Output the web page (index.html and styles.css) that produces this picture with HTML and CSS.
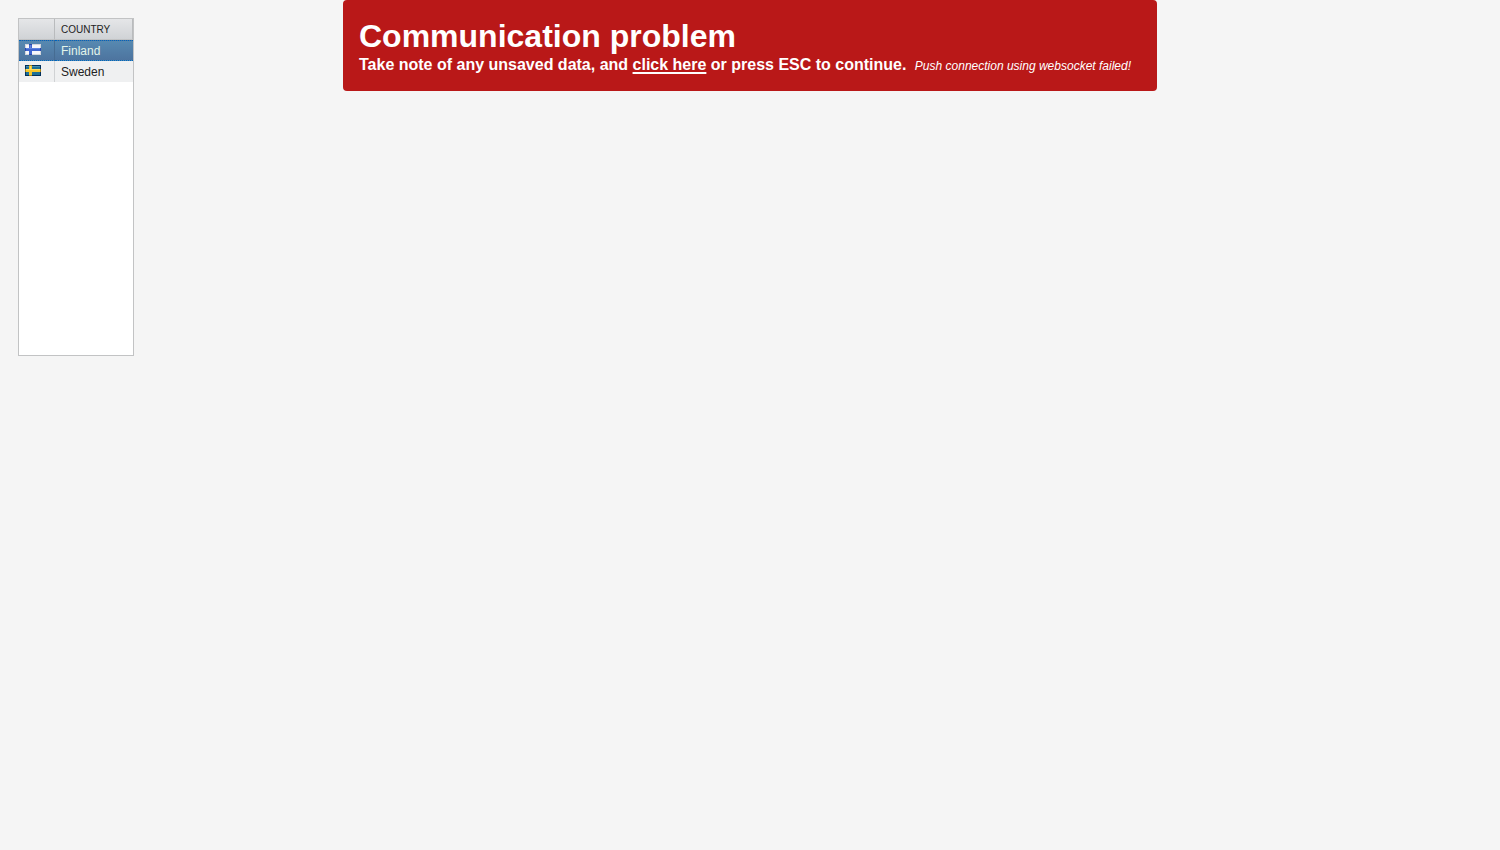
FILE: index.html
```html
<!DOCTYPE html>
<html lang="en">
<head>
<meta charset="utf-8">
<title>Countries</title>
<link rel="stylesheet" href="styles.css">
</head>
<body>
<main class="content">
  <div class="table-box">
    <table class="countries">
      <thead>
        <tr><th class="flag-cell"></th><th>COUNTRY</th></tr>
      </thead>
      <tbody>
        <tr class="selected">
          <td class="flag-cell">
            <svg class="flag" width="16" height="11" viewBox="0 0 16 11" shape-rendering="crispEdges" role="img" aria-label="Finnish flag">
              <rect width="16" height="11" fill="#d3d6dd"/>
              <rect x="1" y="1" width="14" height="9" fill="#f6f7fa"/>
              <path d="M4 0h3v11H4zM0 4h16v3H0z" fill="#3f66d0"/>
              <path d="M5 1h1v3H5zM1 4h14v1H1z" fill="#5f82dc"/>
              <path d="M4 0h3v1H4zM4 10h3v1H4zM0 4h1v3H0zM15 4h1v3H15z" fill="#2a49ae"/>
            </svg>
          </td>
          <td>Finland</td>
        </tr>
        <tr>
          <td class="flag-cell">
            <svg class="flag" width="16" height="11" viewBox="0 0 16 11" shape-rendering="crispEdges" role="img" aria-label="Swedish flag">
              <rect width="16" height="11" fill="#02305c"/>
              <rect x="1" y="1" width="14" height="9" fill="#1c7097"/>
              <path d="M1 1h14v1H1z" fill="#4790ae"/>
              <path d="M4 0h3v11H4zM0 4h16v3H0z" fill="#f5c72c"/>
              <path d="M5 1h1v3H5zM1 4h14v1H1z" fill="#ffdd61"/>
              <path d="M4 0h3v1H4zM4 10h3v1H4zM0 4h1v3H0zM15 4h1v3H15z" fill="#a8851b"/>
            </svg>
          </td>
          <td>Sweden</td>
        </tr>
      </tbody>
    </table>
  </div>
</main>
<div class="notification" role="alert">
  <h1 class="caption">Communication problem</h1>
  <p class="message">Take note of any unsaved data, and <a class="link" href="#">click here</a> or press ESC to continue. <em class="details">Push connection using websocket failed!</em></p>
</div>
</body>
</html>
```
FILE: styles.css
```css
body {
  margin: 0;
  min-height: 100vh;
  background: #f5f5f5;
  color: #222;
  font-family: "Liberation Sans", Arial, sans-serif;
}

.content {
  display: flex;
  padding: 18px;
}

.table-box {
  min-height: 336px;
  border: 1px solid #c2c3c4;
  background: #fff;
}

.countries {
  border-collapse: separate;
  border-spacing: 0;
  text-align: left;
}

.countries th,
.countries td {
  box-sizing: border-box;
  height: 21px;
  min-width: 78px;
  padding: 0 6px;
  vertical-align: middle;
}

.countries .flag-cell {
  min-width: 36px;
  border-right: 1px solid #d0d2d4;
}

.countries th {
  border-bottom: 1px solid #c2c3c4;
  background: linear-gradient(#e5e6e8, #d0d3d6);
  font-size: 10px;
  font-weight: normal;
}

.countries th.flag-cell {
  border-right-color: #b9bbbd;
}

.countries th:last-child {
  border-right: 1px solid #b9bbbd;
}

.countries td {
  background: #eff0f1;
  font-size: 12px;
}

.countries .selected td {
  border-top: 1px dotted #0066bd;
  border-bottom: 1px dotted #0066bd;
  background: linear-gradient(#5789b1, #4d749f);
  color: #e3f5ea;
}

.countries .selected .flag-cell {
  border-right-color: #466c92;
}

.flag {
  display: block;
  margin-bottom: 2px;
}

.notification {
  position: absolute;
  top: 0;
  left: 50%;
  transform: translateX(-50%);
  box-sizing: border-box;
  width: max-content;
  max-width: 100%;
  padding: 17px 26px 15px 16px;
  border-radius: 4px;
  background: #b91818;
  color: #fff;
}

.caption {
  margin: 0;
  font-size: 32px;
  line-height: 38px;
}

.message {
  margin: 0;
  font-size: 16px;
  font-weight: bold;
  line-height: 20px;
}

.link {
  color: inherit;
  text-decoration: underline;
  text-decoration-skip-ink: none;
  text-decoration-thickness: 2px;
  text-underline-offset: 2px;
}

.details {
  margin-left: 4px;
  font-size: 12px;
  font-weight: normal;
}
```
